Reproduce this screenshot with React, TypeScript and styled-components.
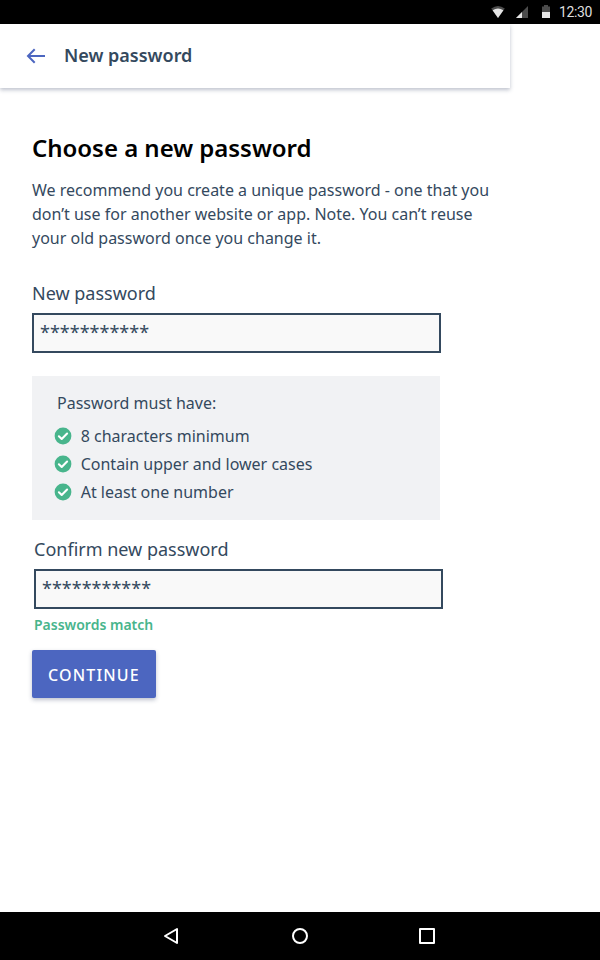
import React from "react";
import styled, { createGlobalStyle } from "styled-components";

const ink = "#34495e";
const indigo = "#4c66c0";
const green = "#48b58c";

const GlobalStyle = createGlobalStyle`
  * { box-sizing: border-box; }
  body { margin: 0; background: #fff; font-family: "Noto Sans", sans-serif; color: ${ink}; }
  h1, h2, p, ul { margin: 0; padding: 0; font-weight: 400; }
`;

const Screen = styled.div`
  display: flex;
  flex-direction: column;
  width: 600px;
  height: 960px;
  overflow: hidden;
`;

const StatusBar = styled.div`
  display: flex;
  align-items: center;
  justify-content: flex-end;
  flex: none;
  height: 24px;
  padding-right: 8px;
  background: #000;
`;

const Clock = styled.span`
  margin-left: 7px;
  font: 400 14px/24px Roboto, sans-serif;
  letter-spacing: -0.4px;
  color: #dedede;
  width: 33px;
  white-space: nowrap;
`;

const Header = styled.header`
  display: flex;
  align-items: center;
  flex: none;
  width: 510px;
  height: 64px;
  padding-left: 24px;
  gap: 16px;
  background: #fff;
  box-shadow: 0 2px 4px rgba(52, 64, 100, 0.32);
  clip-path: inset(0 -10px -12px 0);
`;

const BarTitle = styled.h2`
  padding-bottom: 2px;
  font-size: 18px;
  line-height: 24px;
  font-weight: 600;
`;

const Content = styled.main`
  display: flex;
  flex-direction: column;
  align-items: flex-start;
  flex: 1;
  padding: 44px 0 0 32px;
`;

const Heading = styled.h1`
  font-size: 24px;
  line-height: 32px;
  font-weight: 600;
  letter-spacing: -0.03px;
  color: #000;
`;

const Intro = styled.p`
  width: 478px;
  margin-top: 14px;
  font-size: 16px;
  line-height: 24px;
  white-space: pre-line;
`;

const Field = styled.div<{ $indent?: number; $top: number }>`
  display: flex;
  flex-direction: column;
  margin-top: ${(p) => p.$top}px;
  margin-left: ${(p) => p.$indent ?? 0}px;
`;

const Label = styled.span`
  font-size: 18px;
  line-height: 24px;
`;

const InputBox = styled.div`
  display: flex;
  align-items: center;
  width: 409px;
  height: 40px;
  margin-top: 8px;
  padding: 0 0 2px 6px;
  border: 2px solid ${ink};
  background: #f9f9f9;
  font-size: 18px;
  line-height: 24px;
`;

const Hint = styled.span`
  margin-top: 6px;
  font-size: 14px;
  line-height: 20px;
  font-weight: 600;
  color: ${green};
`;

const Rules = styled.section`
  width: 408px;
  height: 144px;
  margin-top: 23px;
  padding: 15px 0 0 22px;
  background: #f1f2f4;
  font-size: 16px;
  line-height: 24px;
`;

const RulesTitle = styled.p`
  margin: 0 0 7px 3px;
`;

const RuleList = styled.ul`
  display: flex;
  flex-direction: column;
  list-style: none;
`;

const Rule = styled.li`
  display: flex;
  align-items: center;
  gap: 8.7px;
  height: 28px;
`;

const Continue = styled.button`
  width: 124px;
  height: 48px;
  margin-top: 15px;
  padding: 2px 0 0;
  border: 0;
  border-radius: 2px;
  background: ${indigo};
  color: #fff;
  font: 500 16px/24px "Noto Sans", sans-serif;
  letter-spacing: 1.15px;
  box-shadow: 0 2px 4px rgba(52, 64, 100, 0.32);
`;

const NavBar = styled.nav`
  display: flex;
  align-items: center;
  justify-content: center;
  flex: none;
  gap: 104px;
  height: 48px;
  background: #000;
`;

const CheckIcon = () => (
  <svg width="18" height="18" viewBox="0 0 18 18">
    <circle cx="9" cy="9" r="8.4" fill={green} />
    <path d="M4.9 9.3 7.7 11.9 13.1 6.5" fill="none" stroke="#fff" strokeWidth="2.1" strokeLinecap="round" strokeLinejoin="round" />
  </svg>
);

const StatusIcons = () => (
  <svg width="62" height="24" viewBox="490 0 62 24">
    <path d="M498 18 491.2 8.4Q498 3.4 504.8 8.4Z" fill="#4c4c4c" />
    <path d="M498 18 492.6 10.2Q498 6.8 503.4 10.2Z" fill="#e6e6e6" />
    <path d="M516 18 528 6V18Z" fill="#4c4c4c" />
    <path d="M516 18 522 12V18Z" fill="#e6e6e6" />
    <path d="M542 12V6.5H544V5H548V6.5H550V12Z" fill="#4c4c4c" />
    <path d="M542 12H550V18H542Z" fill="#e6e6e6" />
  </svg>
);

const NavIcon = ({ children }: { children: React.ReactNode }) => (
  <svg width="24" height="24" viewBox="0 0 24 24" fill="none" stroke="#fff" strokeWidth="2" strokeLinejoin="round">
    {children}
  </svg>
);

const rules = ["8 characters minimum", "Contain upper and lower cases", "At least one number"];

export default function App() {
  return (
    <Screen>
      <GlobalStyle />
      <StatusBar>
        <StatusIcons />
        <Clock>12:30</Clock>
      </StatusBar>
      <Header>
        <svg width="24" height="24" viewBox="0 0 24 24" fill="none" stroke={indigo} strokeWidth="2">
          <path d="M21 12H4M10.7 5.3 4 12l6.7 6.7" />
        </svg>
        <BarTitle>New password</BarTitle>
      </Header>
      <Content>
        <Heading>Choose a new password</Heading>
        <Intro>
          {"We recommend you create a unique password - one that you\ndon’t use for another website or app. Note. You can’t reuse\nyour old password once you change it."}
        </Intro>
        <Field $top={31}>
          <Label>New password</Label>
          <InputBox>***********</InputBox>
        </Field>
        <Rules>
          <RulesTitle>Password must have:</RulesTitle>
          <RuleList>
            {rules.map((rule) => (
              <Rule key={rule}>
                <CheckIcon />
                {rule}
              </Rule>
            ))}
          </RuleList>
        </Rules>
        <Field $top={17} $indent={2}>
          <Label>Confirm new password</Label>
          <InputBox>***********</InputBox>
          <Hint>Passwords match</Hint>
        </Field>
        <Continue>CONTINUE</Continue>
      </Content>
      <NavBar>
        <NavIcon><path d="M17 5V19L5 12Z" /></NavIcon>
        <NavIcon><circle cx="12" cy="12" r="7" /></NavIcon>
        <NavIcon><rect x="4" y="5" width="14" height="14" /></NavIcon>
      </NavBar>
    </Screen>
  );
}
